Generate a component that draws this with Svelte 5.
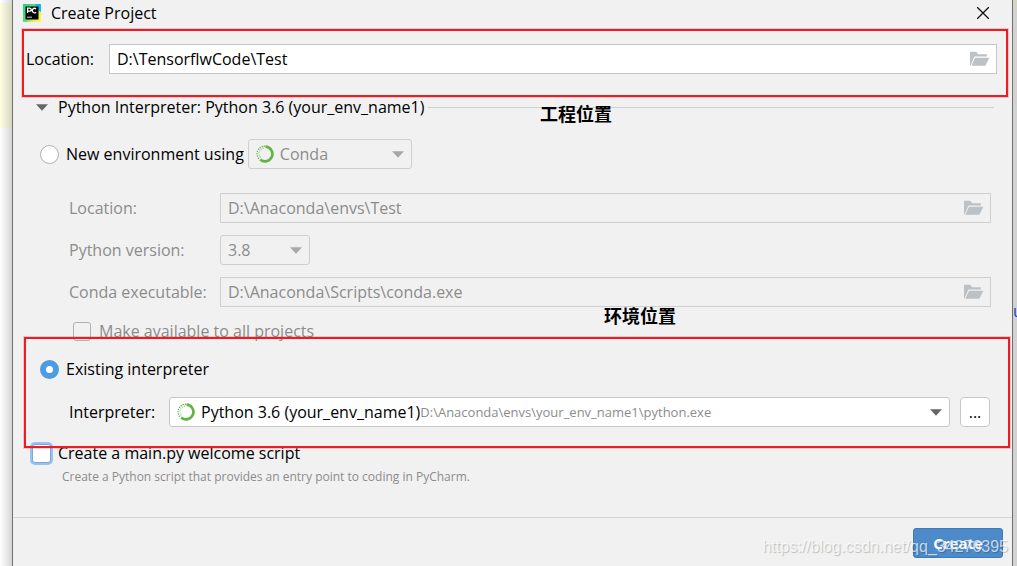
<script>
  let location = $state('D:\\TensorflwCode\\Test');
  let envLocation = $state('D:\\Anaconda\\envs\\Test');
  let condaPath = $state('D:\\Anaconda\\Scripts\\conda.exe');
  let mode = $state('existing');
  let shared = $state(false);
  let welcome = $state(false);

  // Dots of the ring logo, fading out from the top to the lower left
  const dots = [
    [8.4, 1.2, 0.8], [6.2, 1.6, 0.8], [4.2, 2.7, 0.8], [2.6, 4.3, 0.8], [1.4, 6.4, 0.7],
    [1, 8.7, 0.7], [1.4, 11, 0.7], [2.5, 13.2, 0.8], [7.4, 3, 0.6], [5.3, 4, 0.5],
    [3.8, 5.7, 0.5], [3, 7.8, 0.5], [3.1, 10, 0.5], [4, 12, 0.6]
  ];
</script>

{#snippet folder()}
  <svg class="folder" viewBox="0 0 20 16" aria-hidden="true">
    <path d="M0 14.5V0.7h6.2l2 2.5h8.6v2.3H4.4L0.6 14.5z" />
    <path d="M5 6.8h14.4l-4 8H1.4z" />
  </svg>
{/snippet}

{#snippet ring()}
  <svg class="ring" viewBox="0 0 18 18" aria-hidden="true">
    <path d="M9.5 1.7A7.3 7.3 0 1 1 4.2 14.4" />
    {#each dots as [x, y, r]}
      <circle cx={x} cy={y} {r} />
    {/each}
  </svg>
{/snippet}

{#snippet caret()}
  <svg class="caret" viewBox="0 0 12 7" aria-hidden="true"><path d="M0 0.3h12L6 6.7z" /></svg>
{/snippet}

<div class="desktop">
  <div class="edge left"></div>
  <main class="dialog">
    <header>
      <svg class="logo" viewBox="0 0 18 18" aria-hidden="true">
        <defs>
          <linearGradient id="pc" x1="0" y1="0.1" x2="1" y2="0.9">
            <stop offset="0" stop-color="#21d789" />
            <stop offset="0.5" stop-color="#5fdc76" />
            <stop offset="0.75" stop-color="#e8f052" />
            <stop offset="1" stop-color="#fcf84a" />
          </linearGradient>
        </defs>
        <rect width="18" height="18" fill="url(#pc)" />
        <path d="M12 0h5l1 1v7l-3-2z" fill="#12b5e8" />
        <rect x="2.5" y="2.5" width="13" height="13" fill="#050505" />
        <path d="M4.6 9V4.1h2a1.5 1.5 0 0 1 0 3.1h-2M13 5a2.2 2.2 0 1 0 0 3.2" fill="none" stroke="#fff" stroke-width="1.3" />
        <path d="M4 13.2h5" stroke="#ccc" />
      </svg>
      <h1>Create Project</h1>
      <button class="close" aria-label="Close">
        <svg viewBox="0 0 12 12" aria-hidden="true"><path d="M0 0l12 12M12 0l-12 12" /></svg>
      </button>
    </header>

    <form onsubmit={(e) => e.preventDefault()}>
      <div class="row project">
        <label for="location">Location:</label>
        <div class="path">
          <input id="location" bind:value={location} />
          <button type="button" aria-label="Browse project location">{@render folder()}</button>
        </div>
      </div>

      <div class="row group">
        <button type="button" class="toggle" aria-expanded="true">
          {@render caret()}Python Interpreter: Python 3.6 (your_env_name1)
        </button>
        <hr />
      </div>

      <div class="row env">
        <label class="choice"><input type="radio" value="new" bind:group={mode} />New environment using</label>
        <div class="combo off tool">
          {@render ring()}
          <select aria-label="Environment tool" disabled><option>Conda</option></select>
          {@render caret()}
        </div>
      </div>

      <div class="fields">
        <label for="env-location">Location:</label>
        <div class="path off">
          <input id="env-location" bind:value={envLocation} disabled />
          <button type="button" aria-label="Browse environment location" disabled>{@render folder()}</button>
        </div>
        <label for="version">Python version:</label>
        <div class="combo off version">
          <select id="version" disabled><option>3.8</option></select>
          {@render caret()}
        </div>
        <label for="conda">Conda executable:</label>
        <div class="path off">
          <input id="conda" bind:value={condaPath} disabled />
          <button type="button" aria-label="Browse conda executable" disabled>{@render folder()}</button>
        </div>
      </div>

      <label class="row shared"><input type="checkbox" bind:checked={shared} disabled />Make available to all projects</label>

      <div class="row existing">
        <label class="choice"><input type="radio" value="existing" bind:group={mode} />Existing interpreter</label>
      </div>

      <div class="row interpreter">
        <label for="interpreter">Interpreter:</label>
        <div class="combo">
          {@render ring()}
          <select id="interpreter"><option>Python 3.6 (your_env_name1)</option></select>
          <span class="hint">D:\Anaconda\envs\your_env_name1\python.exe</span>
          {@render caret()}
        </div>
        <button type="button" class="more" aria-label="Choose interpreter">...</button>
      </div>

      <label class="row welcome"><input type="checkbox" bind:checked={welcome} />Create a main.py welcome script</label>
      <p>Create a Python script that provides an entry point to coding in PyCharm.</p>

      <footer><button class="create">Create</button></footer>
    </form>
  </main>
  <div class="edge right"><span>u</span></div>

  <div class="mark first"></div>
  <div class="mark second"></div>
  <strong class="note place">工程位置</strong>
  <strong class="note environment">环境位置</strong>
  <span class="watermark">https://blog.csdn.net/qq_34276395</span>
</div>

<style>
  :global(body) {
    margin: 0;
  }
  .desktop {
    position: relative;
    display: flex;
    min-height: 100vh;
    overflow: hidden;
    font: 16px/24px "Open Sans", "Noto Sans CJK SC", sans-serif;
    color: #000;
  }
  .desktop * {
    box-sizing: border-box;
  }
  .edge.left {
    width: 12px;
    background:
      linear-gradient(90deg, transparent, rgba(0, 0, 0, 0.16)),
      linear-gradient(#fff 3px, #ffffe4 3px, #ffffe4 128px, #fff 128px);
  }
  .edge.right {
    width: 4px;
    overflow: hidden;
    background: linear-gradient(#d8d4c4 8px, #d2d2d2 8px);
  }
  .edge.right span {
    display: block;
    margin-top: 299px;
    color: #1a3fc0;
  }
  .dialog {
    flex: 1;
    min-width: 0;
    background: #f1f1f1;
    border: solid #707070;
    border-width: 0 1px;
  }
  button,
  input,
  select {
    font: inherit;
    color: inherit;
    margin: 0;
    padding: 0;
    border: 0;
    background: none;
  }
  header {
    display: flex;
    align-items: center;
    height: 25px;
    padding: 0 23px 0 10px;
  }
  h1 {
    flex: 1;
    margin: 0 0 0 10px;
    font-size: 16px;
    font-weight: 400;
  }
  .logo {
    width: 18px;
    height: 18px;
  }
  .close {
    display: flex;
  }
  .close svg {
    width: 12px;
    height: 12px;
    stroke: #111;
    stroke-width: 1.3;
  }
  .row {
    display: flex;
    align-items: center;
  }
  .path,
  .combo {
    display: flex;
    align-items: center;
    height: 30px;
    min-width: 0;
    border: 1px solid #c6c6c6;
    background: #fff;
  }
  .path input {
    flex: 1;
    min-width: 0;
    padding: 0 7px;
  }
  .path button {
    display: flex;
    margin-right: 6px;
  }
  .combo {
    border-radius: 3px;
    padding: 0 7px;
  }
  .combo select {
    appearance: none;
    field-sizing: content;
    opacity: 1;
    outline: 0;
  }
  .off {
    color: #8c8c8c;
    background: #f1f1f1;
    border-color: #cfcfcf;
  }
  .folder {
    width: 20px;
    height: 16px;
    fill: #bcc1c5;
  }
  .caret {
    width: 12px;
    height: 7px;
    fill: #666;
  }
  .combo .caret {
    margin-left: auto;
    pointer-events: none;
  }
  .off .caret {
    fill: #a8a8a8;
  }
  .ring {
    width: 18px;
    height: 18px;
    margin-right: 6px;
    fill: #62b543;
  }
  .ring path {
    fill: none;
    stroke: #62b543;
    stroke-width: 2.7;
  }
  .project {
    padding: 19px 15px 21px 13px;
  }
  .project label {
    width: 83px;
  }
  .project .path {
    flex: 1;
  }
  .group {
    gap: 4px;
    padding: 0 18px 0 23px;
  }
  .toggle {
    display: flex;
    align-items: center;
    gap: 10px;
    white-space: nowrap;
  }
  hr {
    flex: 1;
    margin: 0;
    border: 0;
    border-top: 1px solid #cfcfcf;
  }
  .env {
    gap: 4px;
    padding: 20px 27px 24px;
  }
  .choice {
    display: flex;
    align-items: center;
    gap: 7px;
  }
  input[type="radio"],
  input[type="checkbox"] {
    appearance: none;
    flex: none;
    width: 19px;
    height: 19px;
    border: 1px solid #b0b0b0;
    border-radius: 50%;
    background: #fff;
  }
  input[type="radio"]:checked {
    border: 6px solid #4d9be3;
  }
  .tool {
    width: 164px;
  }
  .fields {
    display: grid;
    grid-template-columns: 151px 1fr;
    align-items: center;
    row-gap: 12px;
    padding: 0 21px 0 56px;
    color: #8c8c8c;
  }
  .version {
    width: 90px;
  }
  .shared {
    gap: 8px;
    height: 20px;
    margin: 14px 0 16px 60px;
    color: #8c8c8c;
  }
  input[type="checkbox"] {
    border-radius: 3px;
  }
  .shared input[type="checkbox"] {
    width: 18px;
    background: #f1f1f1;
  }
  .existing {
    padding: 0 27px;
  }
  .interpreter {
    padding: 16px 22px 14px 56px;
  }
  .interpreter label {
    width: 100px;
  }
  .interpreter .combo {
    flex: 1;
  }
  .hint {
    font-size: 13px;
    color: #8c8c8c;
  }
  .more {
    width: 30px;
    height: 30px;
    margin-left: 10px;
    border: 1px solid #c6c6c6;
    border-radius: 4px;
    background: #fff;
  }
  .welcome {
    gap: 7px;
    margin-left: 19px;
  }
  .welcome input[type="checkbox"] {
    border: 1px solid #7da7d3;
    box-shadow: 0 0 0 2px #97c3f3;
  }
  p {
    margin: 2px 0 30px 49px;
    font-size: 12px;
    line-height: 20px;
    color: #8c8c8c;
  }
  footer {
    display: flex;
    justify-content: flex-end;
    padding: 10px 9px 8px;
    border-top: 1px solid #d4d4d4;
  }
  .create {
    width: 90px;
    height: 30px;
    border: 1px solid #3f7ab8;
    border-radius: 3px;
    background: #4c8aca;
    color: #fff;
    font-weight: 700;
    font-size: 15px;
  }
  .mark {
    position: absolute;
    border: 2px solid #ed1c24;
    box-shadow: 0 0 0 1px rgba(237, 28, 36, 0.2);
    pointer-events: none;
  }
  .first {
    top: 29px;
    left: 22px;
    right: 9px;
    height: 68px;
  }
  .second {
    top: 337px;
    left: 24px;
    right: 7px;
    height: 111px;
  }
  .note {
    position: absolute;
    font: 700 18px/24px "Noto Sans CJK SC", sans-serif;
  }
  .place {
    top: 101px;
    left: 540px;
  }
  .environment {
    top: 303px;
    left: 604px;
  }
  .watermark {
    position: absolute;
    right: 9px;
    bottom: 7px;
    font: 16px/24px "Liberation Sans", sans-serif;
    color: rgba(255, 255, 255, 0.7);
    text-shadow: 1px 1px 1px rgba(0, 0, 0, 0.22);
    pointer-events: none;
  }
</style>
